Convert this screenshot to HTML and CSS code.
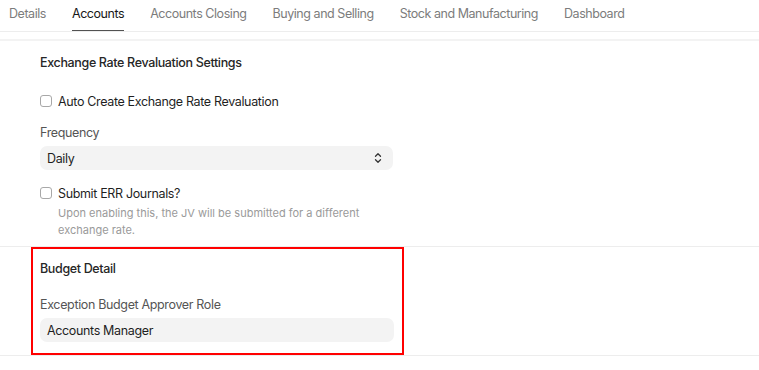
FILE: index.html
```html
<!DOCTYPE html>
<html lang="en">
<head>
    <meta charset="UTF-8">
    <meta name="viewport" content="width=device-width, initial-scale=1.0">
    <title>Company - Accounts</title>
    <link rel="stylesheet" href="styles.css">
</head>
<body>
    <div class="abas">
        <a class="aba">Details</a>
        <a class="aba ativa">Accounts</a>
        <a class="aba">Accounts Closing</a>
        <a class="aba">Buying and Selling</a>
        <a class="aba">Stock and Manufacturing</a>
        <a class="aba">Dashboard</a>
    </div>

    <div class="secao primeira">
        <div class="coluna">
            <h4 class="titulo">Exchange Rate Revaluation Settings</h4>

            <label class="checagem">
                <span class="caixa"></span>
                <span class="rotulo">Auto Create Exchange Rate Revaluation</span>
            </label>

            <div class="campo">
                <div class="legenda">Frequency</div>
                <div class="seletor">
                    <span>Daily</span>
                    <svg width="8" height="12" viewBox="0 0 8 12" fill="none" stroke="#333" stroke-width="1.3" stroke-linecap="round" stroke-linejoin="round">
                        <path d="M1.5 4.2 4 1.8 6.5 4.2"/>
                        <path d="M1.5 7.8 4 10.2 6.5 7.8"/>
                    </svg>
                </div>
            </div>

            <label class="checagem">
                <span class="caixa"></span>
                <span class="rotulo">Submit ERR Journals?</span>
            </label>
            <p class="ajuda">Upon enabling this, the JV will be submitted for a different exchange rate.</p>
        </div>
    </div>

    <div class="secao">
        <div class="destaque">
            <h4 class="titulo">Budget Detail</h4>
            <div class="campo">
                <div class="legenda">Exception Budget Approver Role</div>
                <div class="entrada">Accounts Manager</div>
            </div>
        </div>
    </div>
</body>
</html>
```

FILE: styles.css
```css
* {
    margin: 0;
    padding: 0;
    box-sizing: border-box;
}
body {
    font-family: Inter, "Noto Sans", sans-serif;
    font-size: 12.5px;
    letter-spacing: -0.35px;
    color: #171717;
    background-color: #fff;
}
.abas {
    display: flex;
    gap: 26px;
    padding-left: 9px;
    height: 32px;
    border-bottom: 1px solid #ededed;
}
.aba {
    height: 31px;
    line-height: 28px;
    letter-spacing: -0.45px;
    color: #7c7c7c;
    white-space: nowrap;
}
.aba.ativa {
    color: #171717;
    border-bottom: 1px solid #525252;
}
.secao {
    border-bottom: 1px solid #ededed;
}
.secao.primeira {
    margin-top: 7px;
    border-top: 2px solid #f3f3f3;
    padding: 12px 0 7px 40px;
}
.coluna {
    width: 353px;
}
.titulo {
    font-size: 12.5px;
    font-weight: 500;
    line-height: 20px;
    color: #262626;
}
.checagem {
    display: flex;
    align-items: center;
    gap: 6px;
    margin-top: 18px;
    height: 20px;
}
.caixa {
    width: 12px;
    height: 12px;
    border: 1px solid #a8a8a8;
    border-radius: 3px;
}
.rotulo {
    color: #1f1f1f;
}
.campo {
    margin-top: 12px;
}
.legenda {
    color: #555;
    line-height: 20px;
    margin-bottom: 3px;
}
.seletor,
.entrada {
    height: 24px;
    background-color: #f3f3f3;
    border-radius: 7px;
    padding: 0 7px;
    display: flex;
    align-items: center;
    justify-content: space-between;
    color: #1f1f1f;
}
.seletor svg {
    margin-right: 4px;
}
.secao.primeira .checagem + .campo + .checagem {
    margin-top: 13px;
}
.ajuda {
    margin: 2px 0 0 18px;
    font-size: 11px;
    letter-spacing: 0;
    line-height: 17px;
    color: #9a9a9a;
}
.destaque {
    margin-left: 31px;
    width: 373px;
    border: 2px solid #ff0000;
    padding: 10px 8px 11px 7px;
}
.destaque .campo {
    margin-top: 16px;
}
```
